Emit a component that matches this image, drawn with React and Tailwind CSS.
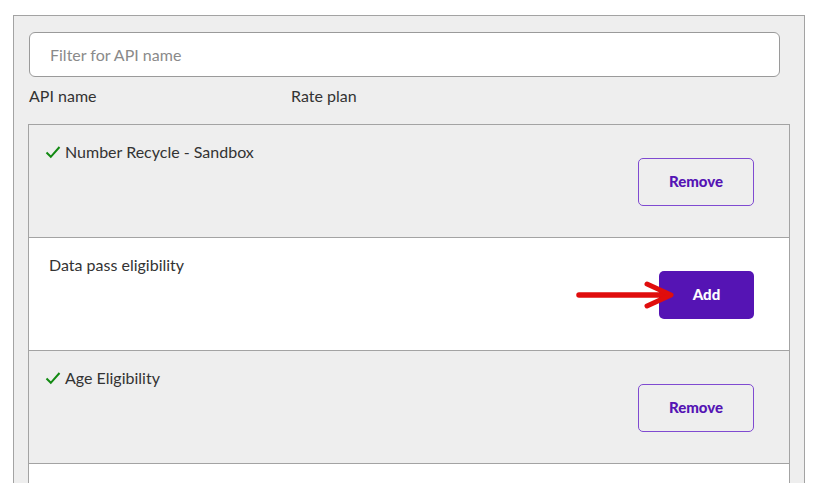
import React from "react";

const Check = () => (
  <svg width="16" height="14" viewBox="0 0 16 14" className="mr-[4px] ml-[-1px] shrink-0">
    <path d="M1.5 7.5 L5.8 11.8 L14.5 2" fill="none" stroke="#138a13" strokeWidth="2" />
  </svg>
);

const RemoveBtn = () => (
  <button className="w-[116px] h-[48px] rounded-[5px] border border-[#7f4ad1] bg-transparent text-[#5514b4] font-black text-[15px] pb-[2px]">
    Remove
  </button>
);

const AddBtn = () => (
  <div className="flex items-center">
    <svg width="98" height="28" viewBox="0 0 98 28" className="mr-[-15px] relative z-10">
      <path d="M3 14 L90 14" stroke="#e00d0d" strokeWidth="5.5" strokeLinecap="round" />
      <path d="M71 3 L95 14 L71 25" fill="none" stroke="#e00d0d" strokeWidth="5" strokeLinecap="round" strokeLinejoin="round" />
    </svg>
    <button className="w-[95px] h-[48px] rounded-[5px] bg-[#5514b4] text-white font-black text-[15px] pb-[2px]">
      Add
    </button>
  </div>
);

const rows = [
  { name: "Number Recycle - Sandbox", added: true },
  { name: "Data pass eligibility", added: false },
  { name: "Age Eligibility", added: true },
  { name: "", added: false },
];

export default function App() {
  return (
    <div className="w-[814px] h-[483px] overflow-hidden bg-white pl-[13px] pt-[15px] pr-[9px] font-['Lato',sans-serif] text-[#333]">
      <div className="h-[600px] border border-[#a3a3a3] bg-[#eeeeee] pl-[15px] pr-[14px] pt-[16px]">
        <div className="w-[751px] h-[45px] rounded-[6px] border border-[#9a9a9a] bg-white flex items-center pl-[20px] text-[16px] text-[#8a8a8a]">
          Filter for API name
        </div>
        <div className="flex h-[47px] items-center text-[16px] text-[#333] pb-[9px]">
          <div className="w-[262px]">API name</div>
          <div>Rate plan</div>
        </div>
        <div className="border border-[#a3a3a3] w-[762px] ml-[-1px]">
          {rows.map((r, i) => (
            <div
              key={i}
              className={`h-[113px] border-b border-[#a3a3a3] flex justify-between ${
                i % 2 === 0 ? "bg-[#eeeeee]" : "bg-white"
              } ${r.added ? "pl-[17px]" : "pl-[20px]"} pr-[35px] pt-[15px]`}
            >
              <div className="flex items-center h-[24px] text-[16px]">
                {r.added && <Check />}
                <span>{r.name}</span>
              </div>
              {r.name && (
                <div className="pt-[18px]">{r.added ? <RemoveBtn /> : <AddBtn />}</div>
              )}
            </div>
          ))}
        </div>
      </div>
    </div>
  );
}
